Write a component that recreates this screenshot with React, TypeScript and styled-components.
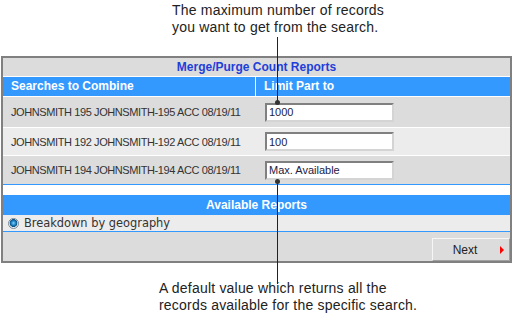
import React from "react";
import styled, { createGlobalStyle } from "styled-components";

const GlobalStyle = createGlobalStyle`
  html, body {
    margin: 0;
    padding: 0;
    background: #ffffff;
  }
  body {
    font-family: "Liberation Sans", Arial, sans-serif;
  }
`;

interface Search {
  name: string;
  limit: string;
  height: number;
}

const searches: Search[] = [
  { name: "JOHNSMITH 195 JOHNSMITH-195 ACC 08/19/11", limit: "1000", height: 30 },
  { name: "JOHNSMITH 192 JOHNSMITH-192 ACC 08/19/11", limit: "100", height: 27 },
  { name: "JOHNSMITH 194 JOHNSMITH-194 ACC 08/19/11", limit: "Max. Available", height: 28 },
];

const App = () => {
  return (
    <>
      <GlobalStyle />
      <Page>
        <Callout $top>
          The maximum number of records
          <br />
          you want to get from the search.
        </Callout>

        <Panel>
          <TitleRow>Merge/Purge Count Reports</TitleRow>
          <HeaderRow>
            <HeaderCell>Searches to Combine</HeaderCell>
            <HeaderCell $divider>Limit Part to</HeaderCell>
          </HeaderRow>
          {searches.map((s, i) => (
            <SearchRow key={s.name} $alt={i % 2 === 1} $h={s.height}>
              <NameCell>{s.name}</NameCell>
              <LimitCell>
                <LimitInput defaultValue={s.limit} />
              </LimitCell>
            </SearchRow>
          ))}
          <Spacer />
          <SectionHeader>Available Reports</SectionHeader>
          <ReportRow>
            <Radio />
            Breakdown by geography
          </ReportRow>
          <Footer>
            <NextButton>
              Next
              <Arrow />
            </NextButton>
          </Footer>
        </Panel>

        <Callout>
          A default value which returns all the
          <br />
          records available for the specific search.
        </Callout>

        <Leader style={{ top: 37, height: 65 }} />
        <Dot style={{ top: 100 }} />
        <Leader style={{ top: 180, height: 104 }} />
        <Dot style={{ top: 179 }} />
      </Page>
    </>
  );
};

export default App;

const Page = styled.div`
  position: relative;
  width: 514px;
  height: 325px;
  overflow: hidden;
`;

const Callout = styled.div<{ $top?: boolean }>`
  font-family: "Liberation Sans", Arial, sans-serif;
  font-size: 14px;
  line-height: 16.5px;
  letter-spacing: 0.2px;
  color: #222222;
  height: ${(p) => (p.$top ? "56px" : "auto")};
  padding: ${(p) => (p.$top ? "2px 0 0 172px" : "17px 0 0 159px")};
  box-sizing: border-box;
`;

const Panel = styled.div`
  margin-left: 1px;
  width: 511px;
  box-sizing: border-box;
  border: 2px solid #808080;
  background: #dcdcdc;
  display: flex;
  flex-direction: column;
`;

const TitleRow = styled.div`
  height: 18px;
  line-height: 18px;
  text-align: center;
  font-size: 12px;
  font-weight: bold;
  color: #1f3fd8;
  background: #dcdcdc;
  border-bottom: 1px solid #ffffff;
`;

const HeaderRow = styled.div`
  display: grid;
  grid-template-columns: 252px 1fr;
  height: 19px;
  background: #3399ff;
  border-bottom: 1px solid #ffffff;
`;

const HeaderCell = styled.div<{ $divider?: boolean }>`
  color: #ffffff;
  font-size: 12px;
  font-weight: bold;
  line-height: 19px;
  padding-left: 8px;
  border-left: ${(p) => (p.$divider ? "1px solid #ffffff" : "none")};
`;

const SearchRow = styled.div<{ $alt: boolean; $h: number }>`
  display: grid;
  grid-template-columns: 253px 1fr;
  align-items: center;
  height: ${(p) => p.$h}px;
  background: ${(p) => (p.$alt ? "#ececec" : "#dcdcdc")};
  border-bottom: 1px solid #ffffff;
  &:nth-of-type(5) {
    border-bottom: none;
  }
`;

const NameCell = styled.div`
  font-size: 11px;
  letter-spacing: -0.4px;
  color: #333333;
  padding-left: 8px;
  white-space: nowrap;
`;

const LimitCell = styled.div`
  padding-left: 9px;
  display: flex;
  align-items: center;
`;

const LimitInput = styled.input`
  width: 129px;
  height: 19px;
  box-sizing: border-box;
  border: 2px solid;
  border-color: #808080 #d4d4d4 #d4d4d4 #808080;
  background: #ffffff;
  font-family: "Liberation Sans", Arial, sans-serif;
  font-size: 11px;
  color: #222244;
  padding: 0 2px;
  outline: none;
`;

const Spacer = styled.div`
  height: 10px;
  background: #ffffff;
  border-top: 1px solid #3399ff;
`;

const SectionHeader = styled.div`
  height: 20px;
  line-height: 20px;
  text-align: center;
  background: #3399ff;
  color: #ffffff;
  font-size: 12px;
  font-weight: bold;
`;

const ReportRow = styled.div`
  height: 16px;
  display: flex;
  align-items: center;
  gap: 5px;
  padding-left: 5px;
  background: #ececec;
  border-bottom: 1px solid #3399ff;
  font-family: "DejaVu Sans", Verdana, sans-serif;
  font-size: 11.4px;
  color: #333333;
`;

const Radio = styled.span`
  width: 11px;
  height: 11px;
  border-radius: 50%;
  box-sizing: border-box;
  border: 1px solid #7a8a99;
  background: radial-gradient(circle at 50% 45%, #7fd0ff 0, #1a7fc0 35%, #0b4f80 55%, #e8eef2 62%);
`;

const Footer = styled.div`
  height: 29px;
  display: flex;
  justify-content: flex-end;
  align-items: flex-end;
  background: #dcdcdc;
`;

const NextButton = styled.button`
  position: relative;
  width: 78px;
  height: 23px;
  box-sizing: border-box;
  border: 1px solid;
  border-color: #f6f6f6 #a0a0a0 #a0a0a0 #f6f6f6;
  background: #dcdcdc;
  font-family: "Liberation Sans", Arial, sans-serif;
  font-size: 12px;
  color: #222222;
  padding: 0 12px 0 0;
  cursor: pointer;
`;

const Arrow = styled.span`
  position: absolute;
  right: 5px;
  top: 7px;
  width: 0;
  height: 0;
  border-top: 4px solid transparent;
  border-bottom: 4px solid transparent;
  border-left: 4px solid #ff0000;
`;

const Leader = styled.div`
  position: absolute;
  left: 277px;
  width: 1px;
  background: #222222;
`;

const Dot = styled.div`
  position: absolute;
  left: 275px;
  width: 5px;
  height: 5px;
  border-radius: 50%;
  background: #333333;
`;
